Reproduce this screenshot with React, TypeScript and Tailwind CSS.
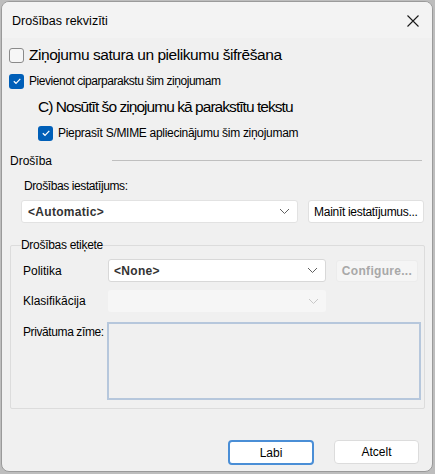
import React from "react";

const font = { fontFamily: '"Liberation Sans", Arial, sans-serif' };

function Check({ checked }: { checked: boolean }) {
  if (checked) {
    return (
      <div className="w-[15px] h-[15px] rounded-[3px] bg-[#005fb8] flex items-center justify-center shrink-0">
        <svg width="10" height="10" viewBox="0 0 10 10">
          <path d="M1.8 5.2 L4 7.3 L8.3 2.8" stroke="#ffffff" strokeWidth="1.2" fill="none" />
        </svg>
      </div>
    );
  }
  return <div className="w-[15px] h-[15px] rounded-[3px] border border-[#8a8a8a] bg-[#f6f6f6] shrink-0" />;
}

function Chevron({ color = "#606060" }: { color?: string }) {
  return (
    <svg width="11" height="7" viewBox="0 0 11 7">
      <path d="M1 1 L5.5 5.5 L10 1" stroke={color} strokeWidth="1" fill="none" />
    </svg>
  );
}

export default function App() {
  return (
    <div className="w-[435px] h-[474px] bg-[#bdbdbd] p-px pr-[2px] pb-[2px] text-[12px] text-black whitespace-nowrap" style={font}>
      <div className="w-full h-full rounded-[8px] border border-[#9a9a9a] bg-[#f0f0f0] flex flex-col overflow-hidden">
        <div className="h-[36px] bg-[#f3f3f3] flex items-center justify-between pl-[10px] pr-[12px] shrink-0">
          <span className="text-[12.5px] mt-[2px]">Drošības rekvizīti</span>
          <svg width="12" height="12" viewBox="0 0 12 12" className="mr-[1px] mt-[2px]">
            <path d="M0.5 0.5 L11.5 11.5 M11.5 0.5 L0.5 11.5" stroke="#1a1a1a" strokeWidth="1.1" />
          </svg>
        </div>
        <div className="flex flex-col pl-[7px] pr-[8px]">
          <div className="h-[18px] mt-[8px] flex items-center gap-[5px]">
            <Check checked={false} />
            <span className="text-[15.5px] leading-none tracking-[-0.45px]">Ziņojumu satura un pielikumu šifrēšana</span>
          </div>
          <div className="h-[18px] mt-[8px] flex items-center gap-[5px]">
            <Check checked={true} />
            <span className="text-[12px] leading-none tracking-[-0.45px]">Pievienot ciparparakstu šim ziņojumam</span>
          </div>
          <div className="h-[20px] mt-[7px] flex items-center pl-[29px]">
            <span className="text-[15.5px] leading-none tracking-[-0.95px]">C) Nosūtīt šo ziņojumu kā parakstītu tekstu</span>
          </div>
          <div className="h-[18px] mt-[7px] flex items-center gap-[5px] pl-[29px]">
            <Check checked={true} />
            <span className="text-[12px] leading-none tracking-[-0.3px]">Pieprasīt S/MIME apliecinājumu šim ziņojumam</span>
          </div>
          <div className="h-[16px] mt-[11px] flex items-center gap-[12px]">
            <span className="leading-none ml-[1px]">Drošība</span>
            <div className="flex-1 h-px bg-[#bfbfbf] mr-[2px] ml-[48px] mt-[-2px]" />
          </div>
          <div className="h-[16px] mt-[9px] flex items-center pl-[15px]">
            <span className="leading-none tracking-[-0.4px]">Drošības iestatījums:</span>
          </div>
          <div className="mt-[6px] flex items-center pl-[12px]">
            <div className="w-[278px] h-[23px] bg-white border border-[#e2e2e2] rounded-[3px] flex items-center justify-between pl-[6px] pr-[7px]">
              <span className="font-bold text-[#333333] tracking-[0.3px]">&lt;Automatic&gt;</span>
              <Chevron />
            </div>
            <div className="ml-[10px] w-[117px] h-[23px] bg-white border border-[#e0e0e0] rounded-[3px] flex items-center justify-center">
              <span className="tracking-[-0.3px]">Mainīt iestatījumus...</span>
            </div>
          </div>
          <div className="mt-[22px] ml-[1px] mr-[-1px] h-[164px] border border-[#dcdcdc] rounded-[2px] relative flex flex-col">
            <span className="absolute left-[10px] top-[-7px] bg-[#f0f0f0] leading-none text-[12px] tracking-[-0.3px]">Drošības etiķete</span>
            <div className="mt-[13px] flex items-center">
              <span className="w-[97px] pl-[12px]">Politika</span>
              <div className="w-[218px] h-[23px] bg-white border border-[#d8d8d8] rounded-[3px] flex items-center justify-between pl-[5px] pr-[7px]">
                <span className="font-bold text-[#333333] tracking-[0.3px]">&lt;None&gt;</span>
                <Chevron />
              </div>
              <div className="ml-[10px] w-[82px] h-[22px] bg-[#f5f5f5] border border-[#ececec] rounded-[3px] flex items-center justify-center">
                <span className="font-bold text-[#a8a8a8] tracking-[0.3px]">Configure...</span>
              </div>
            </div>
            <div className="mt-[8px] flex items-center">
              <span className="w-[97px] pl-[12px]">Klasifikācija</span>
              <div className="w-[218px] h-[22px] bg-[#f6f6f6] rounded-[3px] flex items-center justify-end pr-[7px]">
                <Chevron color="#c8c8c8" />
              </div>
            </div>
            <div className="mt-[10px] flex items-start">
              <span className="w-[96px] pl-[12px] mt-[1px] tracking-[-0.4px]">Privātuma zīme:</span>
              <div className="w-[314px] h-[78px] border-2 border-[#b6c7dc] bg-[#f0f0f0]" />
            </div>
          </div>
          <div className="mt-[31px] flex justify-end gap-[20px] pr-[5px]">
            <div className="w-[86px] h-[25px] bg-white border-2 border-[#4a8ed6] rounded-[4px] flex items-center justify-center">
              <span>Labi</span>
            </div>
            <div className="w-[85px] h-[24px] bg-white border border-[#dcdcdc] rounded-[4px] flex items-center justify-center">
              <span>Atcelt</span>
            </div>
          </div>
        </div>
      </div>
    </div>
  );
}
